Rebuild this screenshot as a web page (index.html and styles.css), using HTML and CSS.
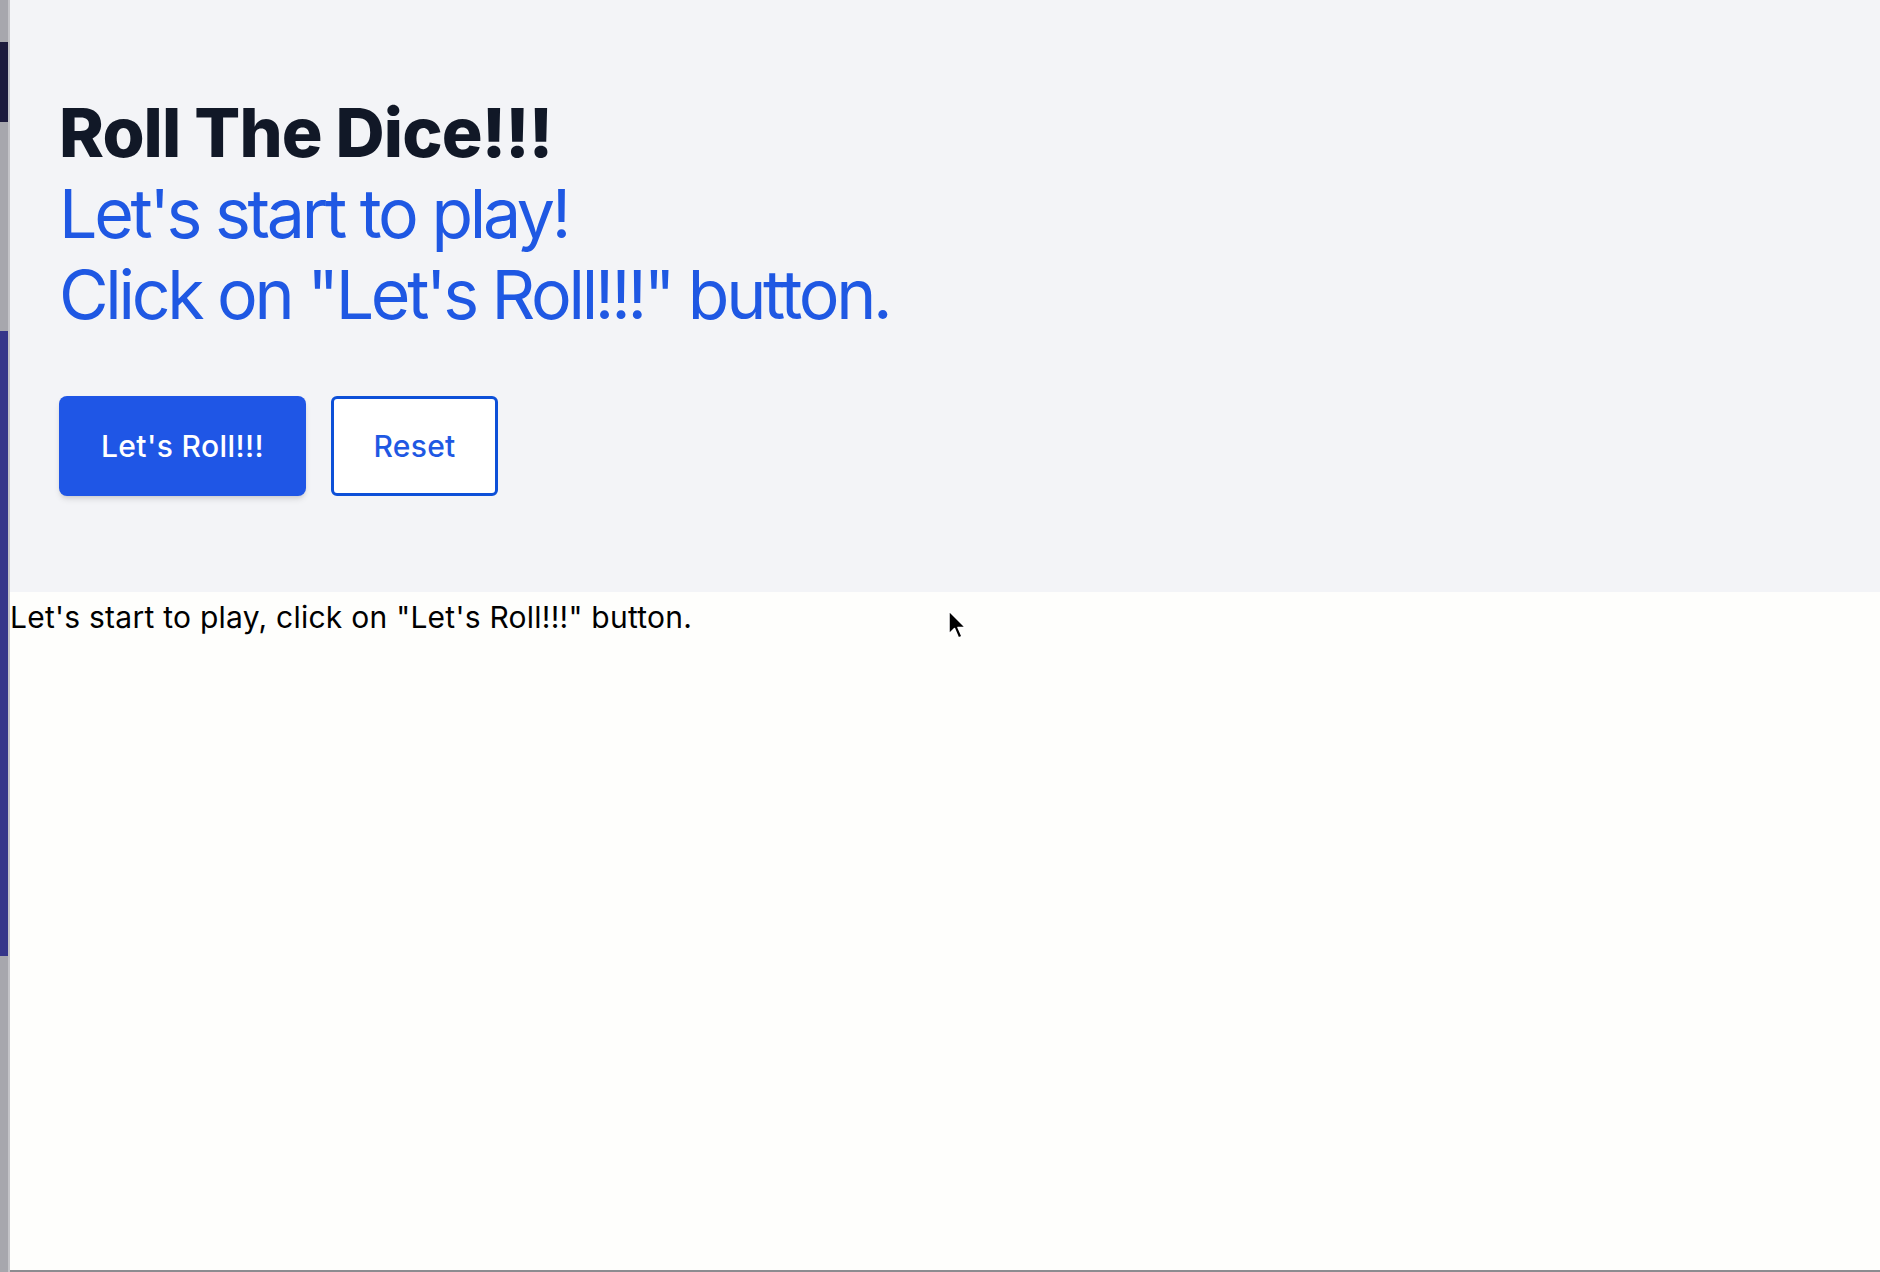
FILE: index.html
```html
<!DOCTYPE html>
<html lang="en">
<head>
<meta charset="utf-8">
<title>Roll The Dice</title>
<link rel="stylesheet" href="styles.css">
</head>
<body>
<div class="frame">
  <div class="strip">
    <div class="seg seg-gray seg-a"></div>
    <div class="seg seg-dark"></div>
    <div class="seg seg-gray seg-b"></div>
    <div class="seg seg-blue"></div>
    <div class="seg seg-gray seg-c"></div>
  </div>
  <main class="page">
    <header class="hero">
      <h1 class="title">Roll The Dice!!!</h1>
      <p class="sub">Let's start to play!<br>Click on "Let's Roll!!!" button.</p>
      <div class="actions">
        <button class="btn btn-primary">Let's Roll!!!</button>
        <button class="btn btn-outline">Reset</button>
      </div>
    </header>
    <p class="status">Let's start to play, click on "Let's Roll!!!" button.</p>
  </main>
  <svg class="cursor" width="22" height="32" viewBox="0 0 22 32" aria-hidden="true">
    <path d="M2 1 L2 24 L7.5 18.5 L11.5 28 L15 26.5 L11 17.5 L18.5 17.5 Z" fill="#000" stroke="#fff" stroke-width="1.5" stroke-linejoin="round"/>
  </svg>
</div>
</body>
</html>
```

FILE: styles.css
```css
html, body {
  margin: 0;
  padding: 0;
}

body {
  width: 1880px;
  height: 1272px;
  overflow: hidden;
  background: #ffffff;
  font-family: "Inter", "Noto Sans", sans-serif;
}

.frame {
  position: relative;
  display: flex;
  width: 1880px;
  height: 1272px;
}

.strip {
  width: 8px;
  display: flex;
  flex-direction: column;
  border-right: 2px solid #c4c4c8;
  flex-shrink: 0;
}

.seg-gray { background: #a7a7ad; }
.seg-a { height: 42px; }
.seg-dark { height: 80px; background: #1d1b3d; }
.seg-b { height: 209px; }
.seg-blue { height: 625px; background: #36368a; }
.seg-c { flex: 1; }

.page {
  flex: 1;
  display: flex;
  flex-direction: column;
  background: #fefefc;
  border-bottom: 2px solid #8c8c90;
}

.hero {
  background: #f3f4f7;
  padding: 92px 0 96px 49px;
}

.title {
  margin: 0;
  font-size: 68px;
  line-height: 81px;
  font-weight: 800;
  letter-spacing: -0.9px;
  color: #111827;
}

.sub {
  margin: 0;
  font-size: 68px;
  line-height: 81px;
  font-weight: 400;
  letter-spacing: -3.3px;
  color: #1f58e3;
}

.actions {
  display: flex;
  gap: 25px;
  margin-top: 61px;
}

.btn {
  height: 100px;
  box-sizing: border-box;
  font-family: "Inter", "Noto Sans", sans-serif;
  font-size: 30px;
  font-weight: 500;
  border-radius: 8px;
  cursor: pointer;
}

.btn-primary {
  width: 247px;
  background: #1f56e6;
  color: #ffffff;
  border: none;
  letter-spacing: 0.4px;
  box-shadow: 0 4px 6px -1px rgba(0, 0, 0, 0.12), 0 2px 4px -2px rgba(0, 0, 0, 0.1);
}

.btn-outline {
  width: 167px;
  background: #ffffff;
  color: #1f58e3;
  border: 3px solid #0d50d8;
  border-radius: 6px;
  letter-spacing: 0.3px;
}

.status {
  margin: 7px 0 0 0;
  font-family: "Inter", "Noto Sans", sans-serif;
  font-size: 30px;
  line-height: 36px;
  letter-spacing: 0.25px;
  color: #000000;
}

.cursor {
  position: absolute;
  left: 947px;
  top: 610px;
}
```
